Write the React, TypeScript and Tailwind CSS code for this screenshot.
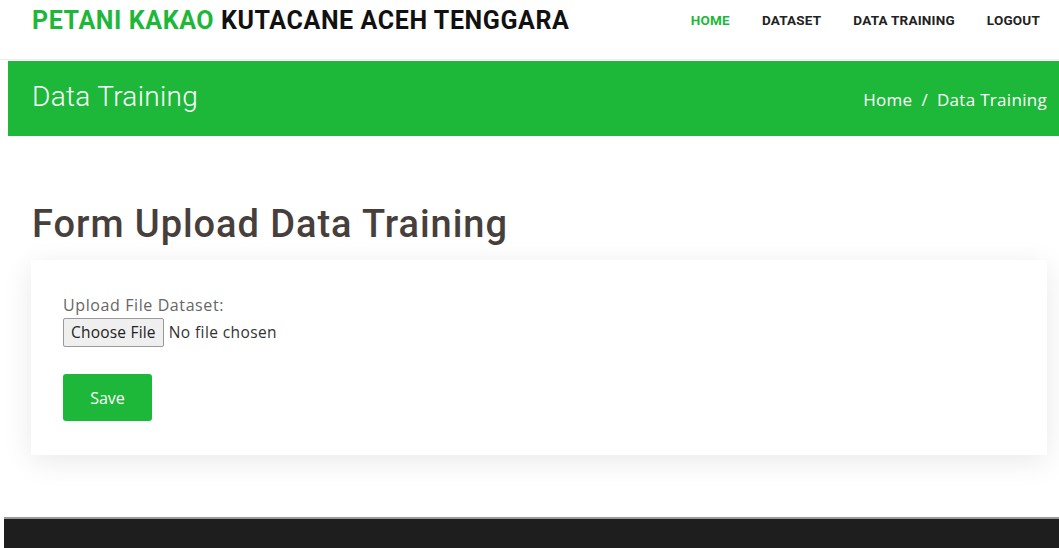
const navItems = ["HOME", "DATASET", "DATA TRAINING", "LOGOUT"];

const Header = () => (
  <header className="h-[60px] border-b border-[#ececec] flex items-center justify-between pl-[32px] pr-[19px] pb-[18px]">
    <h1 className="font-['Roboto'] font-bold text-[25px] tracking-[0.6px] text-[#111] leading-none">
      <span className="text-[#1db83a]">PETANI KAKAO</span> KUTACANE ACEH TENGGARA
    </h1>
    <nav className="flex gap-[32px] font-['Roboto'] font-bold text-[13.5px] tracking-[0.2px] leading-none">
      {navItems.map((item, i) => (
        <a key={item} href="#" className={i === 0 ? "text-[#1db83a]" : "text-[#222]"}>
          {item}
        </a>
      ))}
    </nav>
  </header>
);

const Banner = () => (
  <div className="ml-2 mt-px h-[75px] bg-[#1db83a] flex items-center justify-between pl-[24px] pr-[12px]">
    <h2 className="font-['Roboto'] font-light text-[28px] tracking-[0.3px] text-white leading-none -mt-[4px]">
      Data Training
    </h2>
    <div className="font-['Open_Sans'] text-[17px] tracking-[0.3px] text-white flex gap-[9px] mt-[2px]">
      <span>Home</span>
      <span>/</span>
      <span>Data Training</span>
    </div>
  </div>
);

const UploadForm = () => (
  <form
    className="ml-[31px] mr-[12px] mt-[14px] h-[195px] bg-white shadow-[0_6px_28px_rgba(0,0,0,0.09)] px-[32px] pt-[34px] font-['Open_Sans'] text-[#666]"
    onSubmit={(e) => e.preventDefault()}
  >
    <label className="block text-[16px] tracking-[0.6px] leading-[22px]">Upload File Dataset:</label>
    <div className="flex items-center gap-[5px] mt-[2px]">
      <span className="h-[29px] px-[7px] flex items-center border border-[#9a9a9a] rounded-[2px] bg-[#efefef] text-[15.5px] tracking-[0.2px] text-[#222]">
        Choose File
      </span>
      <span className="text-[15.5px] tracking-[0.4px] text-[#333]">No file chosen</span>
    </div>
    <button
      type="submit"
      className="mt-[27px] w-[89px] h-[47px] rounded-[3px] bg-[#1db83a] text-white text-[16px]"
    >
      Save
    </button>
  </form>
);

export default function App() {
  return (
    <div className="w-[1059px] h-[548px] overflow-hidden bg-white flex flex-col">
      <Header />
      <Banner />
      <main className="flex-1">
        <h3 className="pl-[32px] mt-[66px] font-['Roboto'] font-medium text-[38px] tracking-[0.95px] leading-[44px] text-[#463f3c]">
          Form Upload Data Training
        </h3>
        <UploadForm />
      </main>
      <footer className="ml-1 h-[31px] bg-[#1e1e1e] border-t-2 border-[#9a9a9a]" />
    </div>
  );
}
